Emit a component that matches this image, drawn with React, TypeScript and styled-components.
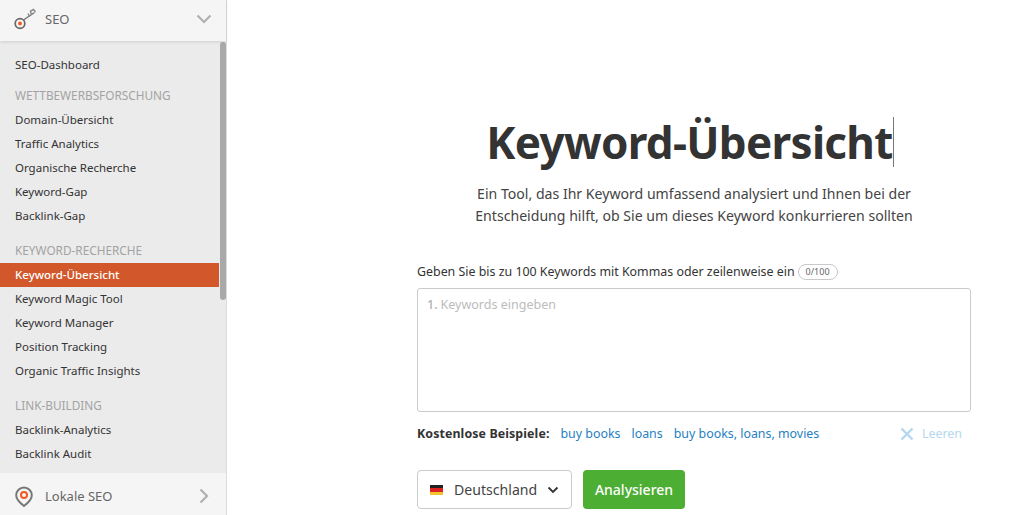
import React from "react";
import styled, { createGlobalStyle } from "styled-components";

const SECTIONS = [
  { title: "", items: ["SEO-Dashboard"] },
  {
    title: "WETTBEWERBSFORSCHUNG",
    items: ["Domain-Übersicht", "Traffic Analytics", "Organische Recherche", "Keyword-Gap", "Backlink-Gap"],
  },
  {
    title: "KEYWORD-RECHERCHE",
    items: ["Keyword-Übersicht", "Keyword Magic Tool", "Keyword Manager", "Position Tracking", "Organic Traffic Insights"],
  },
  {
    title: "LINK-BUILDING",
    items: ["Backlink-Analytics", "Backlink Audit", "Link Building Tool"],
  },
];

const ACTIVE = "Keyword-Übersicht";
const EXAMPLES = ["buy books", "loans", "buy books, loans, movies"];

const Global = createGlobalStyle`
  html, body {
    margin: 0;
    padding: 0;
    height: 515px;
    overflow: hidden;
    background: #fff;
    font-family: "Noto Sans", "Open Sans", sans-serif;
    color: #333;
  }
`;

const App = () => {
  return (
    <>
      <Global />
      <Page>
        <Sidebar>
          <SideHeader>
            <svg width="26" height="26" viewBox="0 0 26 26" fill="none">
              <circle cx="8" cy="17.5" r="4.8" stroke="#666" strokeWidth="1.7" />
              <circle cx="8" cy="17.5" r="1.9" fill="#f15a22" />
              <path d="M11.5 14 L22.5 6.5" stroke="#777" strokeWidth="1.5" />
              <path d="M17.5 10.5 L16 7.5 M19.5 9 L18.5 5 L21.5 3.5 L23.5 6" stroke="#888" strokeWidth="1.4" />
            </svg>
            <SideLabel>SEO</SideLabel>
            <Chevron width="16" height="10" viewBox="0 0 16 10" fill="none">
              <path d="M1.5 1.5 L8 8 L14.5 1.5" stroke="#b0b0b0" strokeWidth="2.2" />
            </Chevron>
          </SideHeader>
          <Menu>
            <Thumb />
            {SECTIONS.map((section) => (
              <MenuSection key={section.items[0]}>
                {section.title && <SectionTitle>{section.title}</SectionTitle>}
                {section.items.map((item) => (
                  <MenuItem key={item} $active={item === ACTIVE}>
                    {item}
                  </MenuItem>
                ))}
              </MenuSection>
            ))}
          </Menu>
          <SideFooter>
            <svg width="26" height="26" viewBox="0 0 26 26" fill="none">
              <path d="M12 23 C8 20 4.2 16.5 4.2 12.3 A7.8 7.8 0 0 1 19.8 12.3 C19.8 16.5 16 20 12 23 Z" stroke="#777" strokeWidth="2" />
              <circle cx="12" cy="12" r="3" stroke="#f15a22" strokeWidth="2" />
            </svg>
            <SideLabel>Lokale SEO</SideLabel>
            <Chevron width="10" height="16" viewBox="0 0 10 16" fill="none">
              <path d="M1.5 1.5 L8 8 L1.5 14.5" stroke="#b0b0b0" strokeWidth="2.2" />
            </Chevron>
          </SideFooter>
        </Sidebar>
        <Main>
          <Title>
            Keyword-Übersicht<Caret />
          </Title>
          <Lead>
            Ein Tool, das Ihr Keyword umfassend analysiert und Ihnen bei der
            <br />
            Entscheidung hilft, ob Sie um dieses Keyword konkurrieren sollten
          </Lead>
          <FieldLabel>
            Geben Sie bis zu 100 Keywords mit Kommas oder zeilenweise ein
            <Counter>0/100</Counter>
          </FieldLabel>
          <KeywordBox>
            <LineNo>1.</LineNo>
            <KeywordInput placeholder="Keywords eingeben" />
          </KeywordBox>
          <Examples>
            <strong>Kostenlose Beispiele:</strong>
            {EXAMPLES.map((e) => (
              <ExampleLink key={e}>{e}</ExampleLink>
            ))}
            <ClearButton>
              <svg width="14" height="14" viewBox="0 0 14 14" fill="none">
                <path d="M1.5 1.5 L12.5 12.5 M12.5 1.5 L1.5 12.5" stroke="#b5d7ef" strokeWidth="2.4" />
              </svg>
              Leeren
            </ClearButton>
          </Examples>
          <Actions>
            <CountrySelect>
              <Flag />
              <CountryName>Deutschland</CountryName>
              <Chevron width="12" height="8" viewBox="0 0 12 8" fill="none">
                <path d="M1.5 1.5 L6 6 L10.5 1.5" stroke="#333" strokeWidth="1.8" />
              </Chevron>
            </CountrySelect>
            <SubmitButton>Analysieren</SubmitButton>
          </Actions>
        </Main>
      </Page>
    </>
  );
};

export default App;

const Page = styled.div`
  display: flex;
  width: 1010px;
  height: 515px;
  overflow: hidden;
`;

const Sidebar = styled.aside`
  width: 226px;
  height: 515px;
  flex: none;
  display: flex;
  flex-direction: column;
  border-right: 1px solid #dcdcdc;
  background: #ebebeb;
`;

const SideHeader = styled.div`
  height: 41px;
  flex: none;
  display: flex;
  align-items: center;
  padding: 0 14px 4px 12px;
  box-sizing: border-box;
  background: #f5f5f5;
  box-shadow: 0 1px 3px rgba(0, 0, 0, 0.12);
  position: relative;
  z-index: 1;
`;

const SideFooter = styled(SideHeader)`
  height: 42px;
  padding: 3px 17px 0 12px;
  box-shadow: none;
`;

const SideLabel = styled.span`
  margin-left: 7px;
  font-size: 13px;
  color: #666;
  flex: 1;
`;

const Chevron = styled.svg`
  flex: none;
`;

const Menu = styled.nav`
  flex: 1;
  position: relative;
  overflow: hidden;
  padding-top: 12px;
  display: flex;
  flex-direction: column;
  gap: 11px;
`;

const Thumb = styled.span`
  position: absolute;
  right: 0;
  top: 1px;
  width: 6px;
  height: 258px;
  border-radius: 3px;
  background: #a9a9a9;
`;

const MenuSection = styled.div`
  display: flex;
  flex-direction: column;
  &:first-of-type {
    margin-bottom: -4px;
  }
`;

const SectionTitle = styled.div`
  height: 24px;
  line-height: 22px;
  padding-left: 15px;
  font-size: 11.8px;
  color: #a3a3a3;
`;

const MenuItem = styled.div<{ $active?: boolean }>`
  height: 24px;
  line-height: 23px;
  width: 219px;
  box-sizing: border-box;
  padding-left: 15px;
  font-size: 11.5px;
  white-space: nowrap;
  color: ${(p) => (p.$active ? "#fff" : "#333")};
  background: ${(p) => (p.$active ? "#d2572a" : "transparent")};
  font-weight: ${(p) => (p.$active ? 500 : 400)};
`;

const Main = styled.main`
  flex: 1;
  padding: 0 39px 0 190px;
  display: flex;
  flex-direction: column;
`;

const Title = styled.h1`
  margin: 112px 0 0 -8px;
  font-size: 44px;
  line-height: 60px;
  font-weight: 700;
  letter-spacing: -0.7px;
  color: #333;
  text-align: center;
  white-space: nowrap;
`;

const Caret = styled.span`
  display: inline-block;
  width: 1px;
  height: 50px;
  background: #777;
  vertical-align: -8px;
`;

const Lead = styled.p`
  margin: 11px 0 0;
  font-size: 14.1px;
  line-height: 22px;
  text-align: center;
  color: #444;
  white-space: nowrap;
`;

const FieldLabel = styled.div`
  margin-top: 37px;
  display: flex;
  align-items: center;
  font-size: 12.4px;
  line-height: 16px;
  color: #333;
  white-space: nowrap;
`;

const Counter = styled.span`
  margin-left: 3px;
  padding: 0 7px;
  height: 14px;
  line-height: 13px;
  font-size: 9px;
  border: 1px solid #c8c8c8;
  border-radius: 8px;
  color: #666;
`;

const KeywordBox = styled.div`
  margin-top: 8px;
  height: 124px;
  box-sizing: border-box;
  border: 1px solid #c9cbcb;
  border-radius: 3px;
  padding: 7px 9px;
  display: flex;
  gap: 3px;
  font-size: 12.5px;
  line-height: 17px;
`;

const LineNo = styled.span`
  color: #b0b0b0;
  font-weight: 500;
`;

const KeywordInput = styled.textarea`
  flex: 1;
  border: 0;
  padding: 0;
  outline: none;
  resize: none;
  font: inherit;
  font-weight: 400;
  &::placeholder {
    color: #bcbcbc;
    opacity: 1;
  }
`;

const Examples = styled.div`
  margin-top: 13px;
  display: flex;
  align-items: center;
  height: 17px;
  font-size: 12.4px;
  white-space: nowrap;
  strong {
    font-weight: 700;
    letter-spacing: 0.1px;
    color: #333;
    margin-right: 11px;
  }
`;

const ExampleLink = styled.a`
  color: #1f7fc4;
  margin-right: 11px;
  cursor: pointer;
`;

const ClearButton = styled.span`
  margin-left: auto;
  margin-right: 9px;
  display: flex;
  align-items: center;
  gap: 8px;
  color: #b5d7ef;
`;

const Actions = styled.div`
  margin-top: 28px;
  display: flex;
  gap: 11px;
`;

const CountrySelect = styled.div`
  width: 155px;
  height: 39px;
  box-sizing: border-box;
  border: 1px solid #c9cbcb;
  border-radius: 4px;
  display: flex;
  align-items: center;
  padding: 0 12px;
  font-size: 14.1px;
  color: #444;
  white-space: nowrap;
`;

const CountryName = styled.span`
  flex: 1;
  margin-left: 11px;
`;

const Flag = styled.span`
  width: 13px;
  height: 10px;
  flex: none;
  background: linear-gradient(#222 0 33%, #d22 33% 66%, #f2c530 66%);
`;

const SubmitButton = styled.button`
  width: 102px;
  height: 39px;
  border: 0;
  border-radius: 4px;
  background: #4cae33;
  color: #fff;
  font: inherit;
  font-size: 14px;
  font-weight: 500;
`;
